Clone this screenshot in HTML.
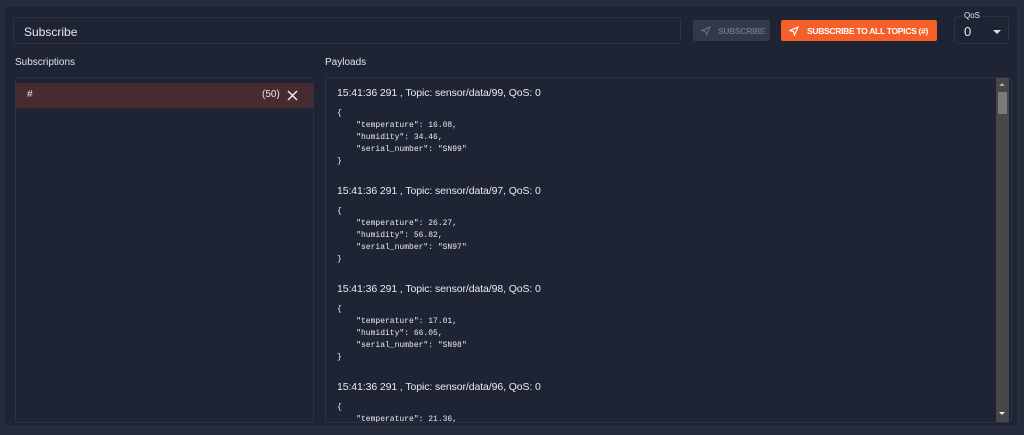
<!DOCTYPE html>
<html><head><style>
*{margin:0;padding:0;box-sizing:border-box}
body{width:1024px;height:435px;background:#262b3c;font-family:"Liberation Sans",sans-serif;color:#e6e8ee;position:relative;overflow:hidden}
.main{position:absolute;left:4px;top:5px;width:1014px;height:422px;background:#1f2434;border:1px solid #2a3042}
.abs{position:absolute}
.input{left:13px;top:17px;width:668px;height:27px;border:1px solid #2c3244;border-radius:3px;font-size:12px;padding:7px 10px;color:#e8e8ee}
.btn1{left:693px;top:20px;width:77px;height:21px;background:#333949;border-radius:2px;color:#6b7182;font-size:8.5px;font-weight:bold;display:flex;align-items:center;padding-left:8px;gap:7px;white-space:nowrap;letter-spacing:-0.3px}
.btn2{left:781px;top:20px;width:156px;height:21px;background:#f5602a;border-radius:2px;color:#fff;font-size:8.5px;font-weight:bold;display:flex;align-items:center;padding-left:8px;gap:8px;white-space:nowrap;letter-spacing:-0.3px}
.qos{left:954px;top:16px;width:55px;height:28px;border:1px solid #2c3244;border-radius:3px}
.lbl{font-size:10px;color:#e0e2ea}
.panel{border:1px solid #2c3244;border-radius:3px;top:77px;height:346px}
.row{left:16px;top:83px;width:297px;height:25px;background:#472b31;font-size:10px}
.ts{font-size:10.5px;color:#e8eaf0;position:absolute;left:11px;letter-spacing:-0.1px}
pre{font-family:"Liberation Mono",monospace;font-size:8px;line-height:12px;color:#e8eaf0;position:absolute;left:11px}
</style></head><body>
<div class="main"></div>
<div class="abs input">Subscribe</div>
<div class="abs btn1"><svg width="10" height="10" viewBox="0 0 10 10"><path d="M9 1L1 4.5 4.5 5.5 5.5 9Z" fill="none" stroke="#6b7182" stroke-width="1"/></svg>SUBSCRIBE</div>
<div class="abs btn2"><svg width="10" height="10" viewBox="0 0 10 10"><path d="M9 1L1 4.5 4.5 5.5 5.5 9Z" fill="none" stroke="#fff" stroke-width="1.2"/></svg>SUBSCRIBE TO ALL TOPICS (#)</div>
<div class="abs qos"></div>
<div class="abs" style="left:962px;top:11px;font-size:8px;background:#1f2434;padding:0 2px">QoS</div>
<div class="abs" style="left:964px;top:24px;font-size:13px">0</div>
<div class="abs" style="left:993px;top:30px;width:0;height:0;border-left:4px solid transparent;border-right:4px solid transparent;border-top:4px solid #ddd"></div>
<div class="abs lbl" style="left:15px;top:57px">Subscriptions</div>
<div class="abs lbl" style="left:325px;top:57px">Payloads</div>
<div class="abs panel" style="left:15px;width:299px"></div>
<div class="abs row"><span style="position:absolute;left:11px;top:6px">#</span><span style="position:absolute;left:246px;top:6px">(50)</span><svg style="position:absolute;left:271px;top:7px" width="11" height="11" viewBox="0 0 11 11"><path d="M1 1L10 10M10 1L1 10" stroke="#eee" stroke-width="1.5"/></svg></div>
<div class="abs panel" style="left:325px;width:687px;overflow:hidden">
<div class="ts" style="top:9px">15:41:36 291 , Topic: sensor/data/99, QoS: 0</div>
<pre style="top:30px">{
    "temperature": 16.08,
    "humidity": 34.46,
    "serial_number": "SN99"
}</pre>
<div class="ts" style="top:107px">15:41:36 291 , Topic: sensor/data/97, QoS: 0</div>
<pre style="top:128px">{
    "temperature": 26.27,
    "humidity": 56.82,
    "serial_number": "SN97"
}</pre>
<div class="ts" style="top:205px">15:41:36 291 , Topic: sensor/data/98, QoS: 0</div>
<pre style="top:226px">{
    "temperature": 17.01,
    "humidity": 66.05,
    "serial_number": "SN98"
}</pre>
<div class="ts" style="top:303px">15:41:36 291 , Topic: sensor/data/96, QoS: 0</div>
<pre style="top:324px">{
    "temperature": 21.36,</pre>
<div class="abs" style="left:670px;top:0;width:13px;height:344px;background:#474747"></div>
<div class="abs" style="left:672px;top:14px;width:9px;height:22px;background:#7a7a7a"></div>
<div class="abs" style="left:673px;top:5px;border-left:3.5px solid transparent;border-right:3.5px solid transparent;border-bottom:3px solid #aaa"></div>
<div class="abs" style="left:673px;top:334px;border-left:3.5px solid transparent;border-right:3.5px solid transparent;border-top:3px solid #eee"></div>
</div>
</body></html>
